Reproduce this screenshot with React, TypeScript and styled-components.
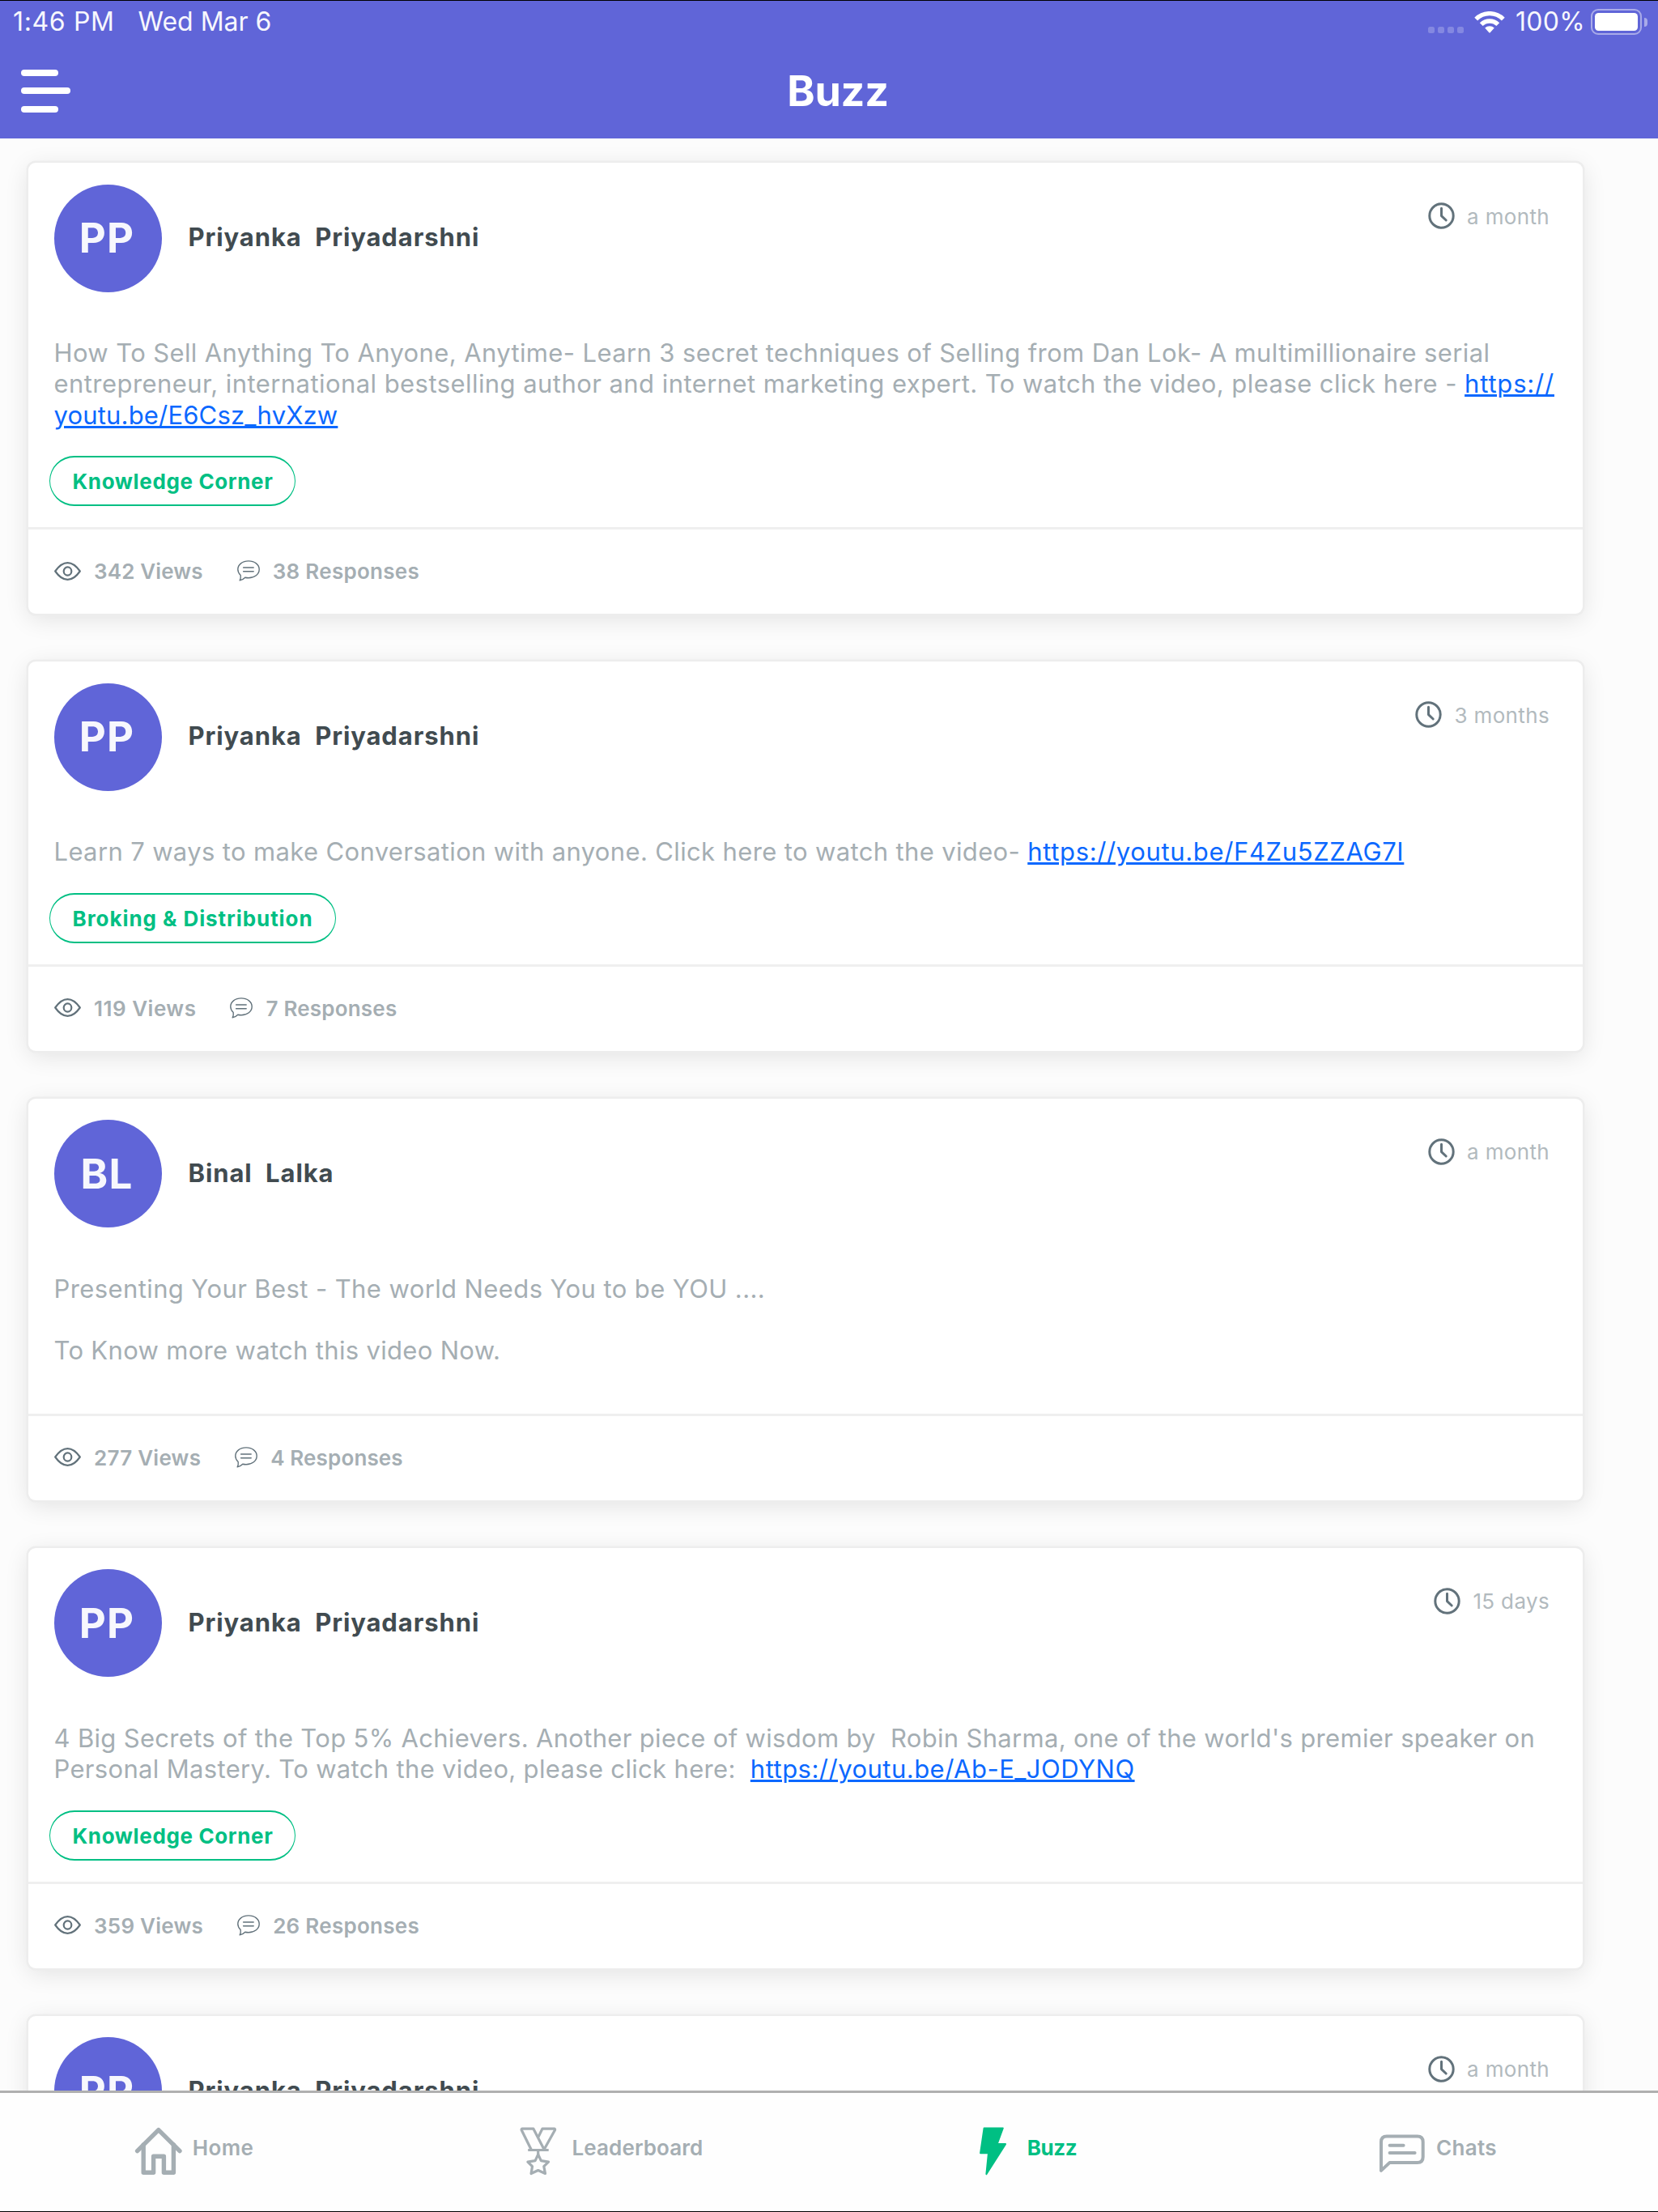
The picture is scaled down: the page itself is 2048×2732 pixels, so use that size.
import React from "react";
import styled, { createGlobalStyle } from "styled-components";

const indigo = "#6065d8";
const green = "#00bf83";
const grey = "#a5aeb3";
const slate = "#62727b";

const GlobalStyle = createGlobalStyle`
  * { box-sizing: border-box; }
  body { margin: 0; background: #fcfcfc; font-family: Inter, "Liberation Sans", sans-serif; }
`;

const Screen = styled.div`
  display: flex;
  flex-direction: column;
  width: 2048px;
  height: 2732px;
  border-top: 1px solid #000;
  border-bottom: 1px solid #000;
  background: #fcfcfc;
  overflow: hidden;
`;

const StatusBar = styled.div`
  display: flex;
  align-items: center;
  height: 51px;
  flex: none;
  padding: 1px 13px 0 16px;
  background: ${indigo};
  color: #f7f7fd;
`;

const StatusText = styled.span<{ $track?: number; $width?: number }>`
  font-size: 32px;
  line-height: 40px;
  letter-spacing: ${(p) => p.$track ?? 0}px;
  width: ${(p) => (p.$width ? `${p.$width}px` : "auto")};
  white-space: pre;
`;

const StatusRight = styled.div`
  display: flex;
  align-items: center;
  margin-left: auto;
`;

const Signal = styled.div`
  display: flex;
  gap: 4px;
  margin: 20px 13px 0 0;
  i {
    width: 8px;
    height: 8px;
    border-radius: 2.5px;
    background: #8488e1;
  }
`;

const Percent = styled(StatusText)`
  margin-left: 13px;
`;

const Battery = styled.div`
  display: flex;
  align-items: center;
  gap: 3px;
  margin-left: 7px;
`;

const BatteryCase = styled.div`
  width: 63px;
  height: 32px;
  padding: 3px;
  border: 2px solid #a9abe9;
  border-radius: 9px;
`;

const BatteryLevel = styled.div`
  height: 100%;
  border-radius: 4.5px;
  background: #fff;
`;

const BatteryNub = styled.div`
  width: 4px;
  height: 11px;
  border-radius: 0 4px 4px 0;
  background: #a9abe9;
`;

const AppBar = styled.header`
  display: flex;
  align-items: center;
  flex: none;
  height: 119px;
  padding: 1px 65px 0 26px;
  background: ${indigo};
`;

const MenuButton = styled.div`
  display: flex;
  flex-direction: column;
  gap: 14.5px;
  width: 61px;
`;

const MenuBar = styled.span<{ $width: number }>`
  width: ${(p) => p.$width}px;
  height: 8px;
  border-radius: 4px;
  background: #fff;
`;

const Title = styled.h1`
  flex: 1;
  margin: 0;
  padding-top: 2px;
  color: #fff;
  text-align: center;
  font-size: 52px;
  line-height: 64px;
  font-weight: 700;
  letter-spacing: -0.2px;
`;

const Feed = styled.main`
  display: flex;
  flex-direction: column;
  gap: 59px;
  flex: 1;
  min-height: 0;
  padding: 30px 93px 0 35px;
  overflow: hidden;
`;

const Card = styled.article`
  flex: none;
  border-radius: 9px;
  background: #fff;
  box-shadow: 0 0 0 2.5px #ededed, 0 6px 30px rgba(0, 0, 0, 0.11);
`;

const CardHead = styled.div`
  display: flex;
  align-items: center;
  height: 186px;
  padding: 0 41px 0 32px;
`;

const Avatar = styled.div`
  display: flex;
  align-items: center;
  justify-content: center;
  width: 133px;
  height: 133px;
  padding: 0 3px 1px 0;
  border-radius: 50%;
  background: ${indigo};
  color: #f7f7fd;
  font-size: 51px;
  font-weight: 700;
  letter-spacing: 1.2px;
`;

const Name = styled.div`
  margin: -2px 0 0 32.5px;
  color: #414b50;
  font-size: 31px;
  line-height: 40px;
  font-weight: 700;
  letter-spacing: 0.9px;
  white-space: pre;
`;

const Posted = styled.div`
  display: flex;
  align-items: center;
  align-self: flex-start;
  gap: 15.5px;
  margin: 48.5px 0 0 auto;
  color: #b2babe;
  font-size: 26px;
  line-height: 32px;
  letter-spacing: 0.35px;
  svg { flex: none; }
  span { padding-top: 2px; }
`;

const Body = styled.div<{ $tagged: boolean }>`
  padding: 30.2px 0 ${(p) => (p.$tagged ? 31.2 : 58.2)}px 31.5px;
`;

const BodyLine = styled.div`
  height: 38.25px;
  color: ${grey};
  font-size: 31px;
  line-height: 38.25px;
  white-space: pre;
`;

const Run = styled.span<{ $track: number }>`
  letter-spacing: ${(p) => p.$track}px;
`;

const Link = styled.a<{ $track: number }>`
  color: #0b68ff;
  letter-spacing: ${(p) => p.$track}px;
  text-decoration: underline;
  text-decoration-thickness: 2.6px;
  text-underline-offset: 2px;
`;

const Tag = styled.div<{ $track: number }>`
  display: flex;
  align-items: center;
  width: max-content;
  height: 62px;
  margin: 0 0 26px 26px;
  padding: 1px 27px 0 27.5px;
  border: solid ${green};
  border-width: 2px 1.5px;
  border-radius: 31px;
  color: ${green};
  font-size: 26px;
  font-weight: 700;
  letter-spacing: ${(p) => p.$track}px;
`;

const CardFoot = styled.div`
  display: flex;
  align-items: center;
  height: 107px;
  padding: 0 32px 2px;
  border-top: 3px solid #efefef;
`;

const Stat = styled.div<{ $track: number }>`
  display: flex;
  align-items: center;
  gap: 16px;
  margin-right: 42px;
  color: ${grey};
  font-size: 26px;
  line-height: 32px;
  font-weight: 600;
  letter-spacing: ${(p) => p.$track}px;
  svg { flex: none; }
  span { padding-top: 1.5px; }
`;

const TabBar = styled.nav`
  display: grid;
  grid-template-columns: repeat(4, 1fr);
  flex: none;
  height: 149px;
  border-top: 3px solid #b0b0b0;
  background: #fefefe;
`;

const Tab = styled.div<{ $active?: boolean }>`
  display: flex;
  align-items: center;
  justify-content: center;
  gap: 12px;
  padding: 0 33px 2px 0;
  color: ${(p) => (p.$active ? green : grey)};
  font-weight: ${(p) => (p.$active ? 700 : 600)};
`;

const TabLabel = styled.span<{ $track: number }>`
  padding-bottom: 9px;
  font-size: 26px;
  line-height: 32px;
  letter-spacing: ${(p) => p.$track}px;
`;

const WifiIcon = () => (
  <svg width="38" height="27" viewBox="0 0 38 27" fill="none" stroke="#fff" strokeWidth="5.4">
    <path d="M2.2 9.6A23.8 23.8 0 0 1 35.8 9.6" />
    <path d="M8.7 16.2A14.6 14.6 0 0 1 29.3 16.2" />
    <path d="M13.2 20.6A8.2 8.2 0 0 1 24.8 20.6L19.9 26Q19 27 18.1 26Z" fill="#fff" stroke="none" />
  </svg>
);

const ClockIcon = () => (
  <svg width="33" height="33" viewBox="0 0 33 33" fill="none" stroke={slate} strokeWidth="3" strokeLinecap="round" strokeLinejoin="round">
    <circle cx="16.5" cy="16.5" r="14.7" />
    <path d="M16.5 7.2V16.6L22.2 22" />
  </svg>
);

const EyeIcon = () => (
  <svg width="33" height="23" viewBox="0 0 33 23" fill="none" stroke={slate} strokeWidth="2.2">
    <path d="M1.2 11.5C6 4.6 11 1.1 16.5 1.1S27 4.6 31.8 11.5C27 18.4 22 21.9 16.5 21.9S6 18.4 1.2 11.5Z" strokeLinejoin="round" />
    <ellipse cx="16.5" cy="11.5" rx="4.8" ry="5.1" />
  </svg>
);

const BubbleIcon = () => (
  <svg width="28" height="26" viewBox="0 0 28 26" fill="none" stroke={slate} strokeWidth="1.4" strokeLinecap="round" strokeLinejoin="round">
    <path d="M3.2 24.8Q4.7 21.8 4.2 18.4Q0.8 15.4 0.8 11.3C0.8 5.4 6.4 0.9 14 0.9S27.2 5.4 27.2 11.3S21.4 21.7 14 21.7Q11.8 21.7 9.8 21.2Q7.2 24 3.2 24.8Z" />
    <path d="M7.6 9H20.2M7.6 13.8H20.2" />
  </svg>
);

const HomeIcon = () => (
  <svg width="60" height="60" viewBox="0 0 60 60" fill="none" stroke="currentColor" strokeWidth="5.4" strokeLinecap="round" strokeLinejoin="round">
    <path d="M3.6 29.6L29.8 3.6L56 29.6" />
    <path d="M11.2 22V56.2H23.6V36.2H36.4V56.2H48.4V22" />
  </svg>
);

const MedalIcon = () => (
  <svg width="60" height="60" viewBox="-7.5 -0.5 60 60" fill="none" stroke="currentColor" strokeWidth="3.2" strokeLinejoin="round">
    <path d="M13.7 27.5L1.7 3.2Q1.2 1.7 2.8 1.7H16.4L29.6 27.3L43 3.2Q43.5 1.7 42 1.7H27.4L22.2 12.4" />
    <path d="M9.7 28H35.2M22.2 28V34" />
    <path d="M22.2 33.4L25.8 41.2L35 42.6L29.3 48.2L31 57L22.2 53L13.6 57L15 48.2L9.4 42.6L18.6 41.2Z" />
  </svg>
);

const BoltIcon = () => (
  <svg width="60" height="60" viewBox="-13 -0.5 60 60" fill="currentColor" stroke="currentColor" strokeWidth="2" strokeLinejoin="round">
    <path d="M5.6 1H28.8L21.6 20.6H32L8.4 57.6L11 31.7H1.1Z" />
  </svg>
);

const ChatIcon = () => (
  <svg width="60" height="60" viewBox="-2 -9.5 60 60" fill="none" stroke="currentColor" strokeWidth="4" strokeLinecap="round" strokeLinejoin="round">
    <path d="M2 44.4V9Q2 2 9 2H46.7Q53.7 2 53.7 9V27.6Q53.7 34.6 46.7 34.6H12.4Z" />
    <path d="M12.6 13.2H29.6M12.6 22.5H43.6" />
  </svg>
);

type Part = { text: string; track: number; link?: boolean };
type Label = { text: string; track: number };
type Post = {
  initials: string;
  name: string;
  posted: string;
  lines: Part[][];
  tag?: Label;
  stats?: { views: Label; responses: Label };
};

const posts: Post[] = [
  {
    initials: "PP",
    name: "Priyanka  Priyadarshni",
    posted: "a month",
    lines: [
      [{ text: "How To Sell Anything To Anyone, Anytime- Learn 3 secret techniques of Selling from Dan Lok- A multimillionaire serial", track: 0.38 }],
      [
        { text: "entrepreneur, international bestselling author and internet marketing expert. To watch the video, please click here - ", track: 0.44 },
        { text: "https://", track: 0.8, link: true },
      ],
      [{ text: "youtu.be/E6Csz_hvXzw", track: 0.17, link: true }],
    ],
    tag: { text: "Knowledge Corner", track: 0.63 },
    stats: { views: { text: "342 Views", track: 0.15 }, responses: { text: "38 Responses", track: 0.28 } },
  },
  {
    initials: "PP",
    name: "Priyanka  Priyadarshni",
    posted: "3 months",
    lines: [
      [
        { text: "Learn 7 ways to make Conversation with anyone. Click here to watch the video- ", track: 0.36 },
        { text: "https://youtu.be/F4Zu5ZZAG7I", track: 0.64, link: true },
      ],
    ],
    tag: { text: "Broking & Distribution", track: 0.93 },
    stats: { views: { text: "119 Views", track: 0.5 }, responses: { text: "7 Responses", track: 0.2 } },
  },
  {
    initials: "BL",
    name: "Binal  Lalka",
    posted: "a month",
    lines: [
      [{ text: "Presenting Your Best - The world Needs You to be YOU ....", track: 0.4 }],
      [],
      [{ text: "To Know more watch this video Now.", track: 0.32 }],
    ],
    stats: { views: { text: "277 Views", track: 0.24 }, responses: { text: "4 Responses", track: 0.14 } },
  },
  {
    initials: "PP",
    name: "Priyanka  Priyadarshni",
    posted: "15 days",
    lines: [
      [{ text: "4 Big Secrets of the Top 5% Achievers. Another piece of wisdom by  Robin Sharma, one of the world's premier speaker on", track: 0.32 }],
      [
        { text: "Personal Mastery. To watch the video, please click here:  ", track: 0.33 },
        { text: "https://youtu.be/Ab-E_JODYNQ", track: 0.48, link: true },
      ],
    ],
    tag: { text: "Knowledge Corner", track: 0.63 },
    stats: { views: { text: "359 Views", track: 0.25 }, responses: { text: "26 Responses", track: 0.28 } },
  },
  {
    initials: "PP",
    name: "Priyanka  Priyadarshni",
    posted: "a month",
    lines: [],
  },
];

const PostCard = ({ post }: { post: Post }) => (
  <Card>
    <CardHead>
      <Avatar>{post.initials}</Avatar>
      <Name>{post.name}</Name>
      <Posted>
        <ClockIcon />
        <span>{post.posted}</span>
      </Posted>
    </CardHead>
    <Body $tagged={!!post.tag}>
      {post.lines.map((parts, i) => (
        <BodyLine key={i}>
          {parts.map((p) =>
            p.link ? (
              <Link key={p.text} $track={p.track}>{p.text}</Link>
            ) : (
              <Run key={p.text} $track={p.track}>{p.text}</Run>
            )
          )}
        </BodyLine>
      ))}
    </Body>
    {post.tag && <Tag $track={post.tag.track}>{post.tag.text}</Tag>}
    {post.stats && (
      <CardFoot>
        <Stat $track={post.stats.views.track}>
          <EyeIcon />
          <span>{post.stats.views.text}</span>
        </Stat>
        <Stat $track={post.stats.responses.track}>
          <BubbleIcon />
          <span>{post.stats.responses.text}</span>
        </Stat>
      </CardFoot>
    )}
  </Card>
);

export default function App() {
  return (
    <>
      <GlobalStyle />
      <Screen>
        <StatusBar>
          <StatusText $track={0.65} $width={154.5}>1:46 PM</StatusText>
          <StatusText>Wed Mar 6</StatusText>
          <StatusRight>
            <Signal><i /><i /><i /><i /></Signal>
            <WifiIcon />
            <Percent $track={0.3}>100%</Percent>
            <Battery>
              <BatteryCase><BatteryLevel /></BatteryCase>
              <BatteryNub />
            </Battery>
          </StatusRight>
        </StatusBar>
        <AppBar>
          <MenuButton>
            <MenuBar $width={45.5} />
            <MenuBar $width={61} />
            <MenuBar $width={45.5} />
          </MenuButton>
          <Title>Buzz</Title>
        </AppBar>
        <Feed>
          {posts.map((post, i) => (
            <PostCard key={i} post={post} />
          ))}
        </Feed>
        <TabBar>
          <Tab><HomeIcon /><TabLabel $track={0.4}>Home</TabLabel></Tab>
          <Tab><MedalIcon /><TabLabel $track={0.1}>Leaderboard</TabLabel></Tab>
          <Tab $active><BoltIcon /><TabLabel $track={-0.4}>Buzz</TabLabel></Tab>
          <Tab><ChatIcon /><TabLabel $track={0.3}>Chats</TabLabel></Tab>
        </TabBar>
      </Screen>
    </>
  );
}
